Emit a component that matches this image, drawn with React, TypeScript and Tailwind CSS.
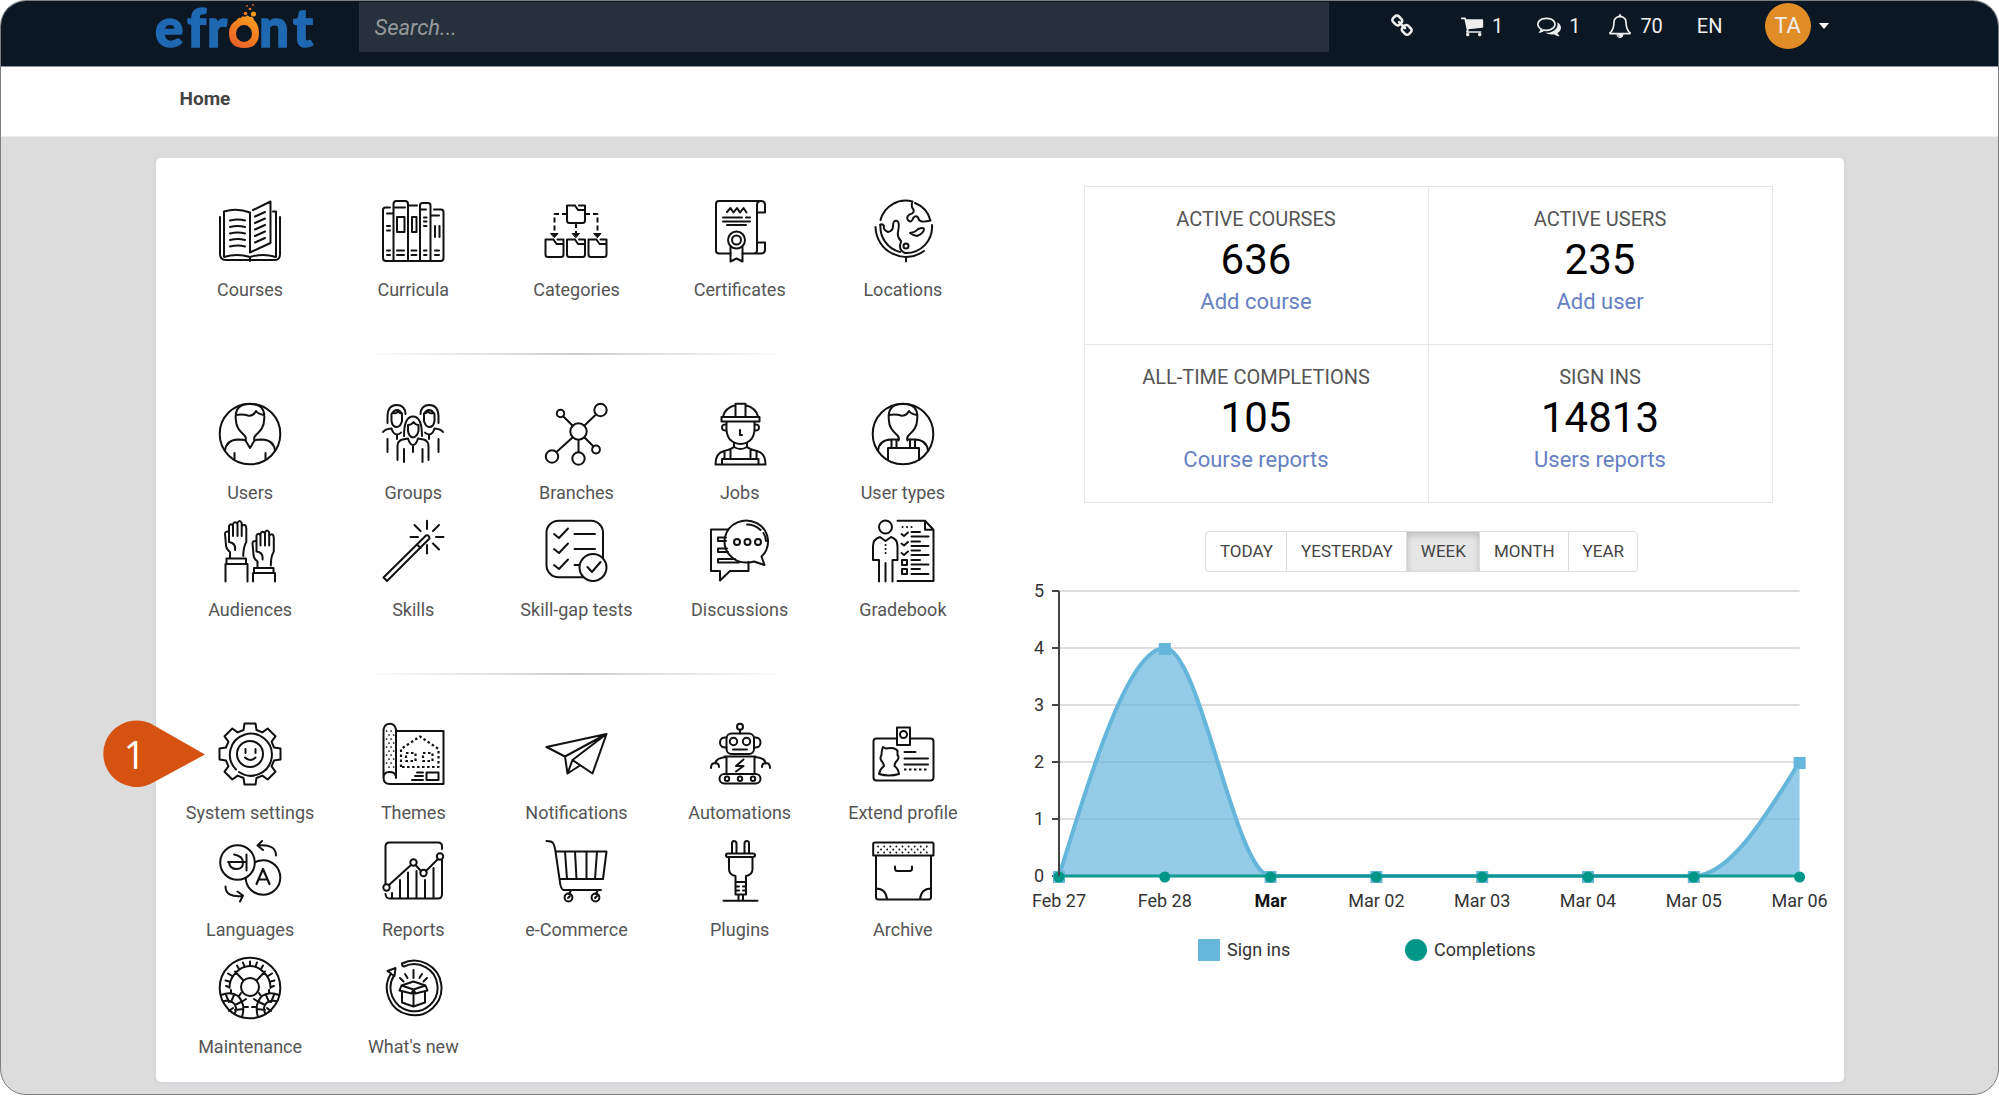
import React from "react";

type IconMap = Record<string, React.ReactNode>;

const range = (n: number) => Array.from({ length: n }, (_, i) => i);

const gearPath =
  range(8)
    .map((k) => {
      const a = (k * Math.PI) / 4;
      return [
        [-6.5, -24],
        [-5.5, -30.5],
        [5.5, -30.5],
        [6.5, -24],
      ]
        .map(([x, y], i) => {
          const px = 31 + x * Math.cos(a) - y * Math.sin(a);
          const py = 31 + x * Math.sin(a) + y * Math.cos(a);
          return (k === 0 && i === 0 ? "M" : "L") + px.toFixed(2) + " " + py.toFixed(2);
        })
        .join("");
    })
    .join("") + "z";

const folder = (x: number, y: number) =>
  `M${x + 8} ${y}H${x}v15q0 2.500 2.500 2.500h13q2.500 0 2.500-2.500V${y + 4.5}h-7l-3-4.500M${x + 12} ${y}h6v4`;

const hand = (
  <path d="M11 38v-6q-4-3-4-7L6 14q0-3 4-2.500V6q2-3.500 4 0M14 16V4q2-3.500 4.500 0v12M18.500 3q2-4 4.200 0v13M22.700 6q4-3 4.600 2v14q-3 5-3 14M10 12v10q7 1 6 8M14 4v12" />
);

const womanLeft = (
  <path d="M5.500 20V13Q6 2 14.500 2T23.500 11M11 10q5 1 5-3 0 3 4 3.500M9.500 11v7q1 6 5 6t5.500-6v-7q-2-4-5-4t-5.500 4M1 29q2-3 8.500-3.500Q11 31 14.500 31.500q3 0 4.500-2M15 32v4M5.500 36v13" />
);

const userHead = (
  <path d="M26.500 37.500q1-3-1-5Q17 25 17 18q-1-7 1-11 3-6 13-6t13 6q2 4 1 11 0 7-8.500 14.500-2 2-1 5M17 12q7-1 12 .5 5 1 8-4.500 2 3 8 4" />
);

const icons: IconMap = {
  Courses: (
    <>
      <path d="M1 17v37q0 6 6 6h49q5 0 5-6V17M5 57V11.500q13-4 26 1V52.500L51.500 43V1.500L34 10M5 57q13-4 26 0 13-4 26 0V11.500h-3M31 57v4" />
      <path d="M11 20.500q8-2 15 0M11 27q8-2 15 0M11 33.500q8-2 15 0M11 40q8-2 15 0M11 46.500q8-2 15 0M36 16.500l10-4.500M36 23l10-4.500M36 29.500l10-4.500M36 36l10-4.500M36 42.500l10-4.500" />
    </>
  ),
  Curricula: (
    <path d="M8 7.500H3.500Q1 7.500 1 10v48q0 3 3 3h54.500q3 0 3-3V12q0-2.500-2.500-2.500h-7M11.500 61V4q0-3 3-3H23q3 0 3 3v57M38 61V5.500q0-2.500 2.500-2.500H46q2.500 0 2.500 2.500V61M11.500 7.500H23M27 5.500h8M38 9.500h6M5 13.500h5.500M49 15.500h8M15 17h7.500v15H15zM30 17h4.500v15H30zM5 26h3M5 30.500h3M5 50.500h3M5 55h3M15 50.500h7M15 55h7M29.500 50.500h5M29.500 55h5M42 50.500h2.500M42 55h2.500M42 17.500h2.500M42 21.500h2.500M42 26h2.500M53 50.500h4M53 55h4M53 26v11M57.500 26v11" />
  ),
  Categories: (
    <>
      <path d={folder(22, 5.5)} />
      <path d={folder(0.5, 39.5)} />
      <path d={folder(22, 39.5)} />
      <path d={folder(43.5, 39.5)} />
      <path d="M22 14H9.500v20M40 14h12.500v20M31 23v12" strokeDasharray="5 3" strokeLinecap="butt" />
      <path d="M6 33.500h7l-3.500 4zM27.500 33.500h7l-3.500 4zM49 33.500h7l-3.500 4z" fill="currentColor" strokeWidth="1" />
    </>
  ),
  Certificates: (
    <>
      <path d="M21.500 53.500H10q-3 0-3-3V4q0-3 3-3h42q4 0 4 4v7.500h-8V5q0-4 4-4M48 12.500V46M33.500 53.500H52q4 0 4-4v-7h-8V50q0 3.500-3 3.500M18 12l3.500-4 3 4.500 3.500-4.500 3 4.500 3.500-4.500 3 4.500M14 17.500h19M37 17.500h4M14 21.500h27M18 25h19" />
      <circle cx="27.500" cy="40" r="8.500" />
      <circle cx="27.500" cy="40" r="4.500" />
      <path d="M21.500 47v14.500l6-3 6 3V47" />
    </>
  ),
  Locations: (
    <>
      <path d="M8.500 20A26 26 0 0 1 40.500 1.500q-2 5 1 8 1 4-4 5-4 3-1 6 3 3 5-3 3-3 5 1 1 5 12 2A26 26 0 0 0 43 3M60 25A26 26 0 0 1 33 53q-5-2-5-7l1-5q-4-4-3-9 2-10-1-11-4-1-4 5 0 5-5 6-5-2-4-6-2-3-4-1M8.500 24.500A26 26 0 0 0 28 52M3.500 27A30.500 30.500 0 0 0 52 51M34 57.500v4" />
      <path d="M38 33q6-1 8-4 6-2 6 0 0 4-7 7-3 0-7-3z" />
      <circle cx="34" cy="46" r="2.500" />
    </>
  ),
  Users: (
    <>
      <circle cx="31" cy="31" r="30.300" />
      {userHead}
      <path d="M6 48q1-11 13-11.500 6 0 7.500 1L31 45l4.500-7.500q1.500-1 7.500-1Q55 37 56 48M15.500 50v6M46.500 50v6" />
    </>
  ),
  Groups: (
    <>
      {womanLeft}
      <g transform="translate(62 0) scale(-1 1)">{womanLeft}</g>
      <path d="M22 33q0-19.500 9-19.500T40 33M26 22v6q1 6 5 6.500 4-.5 5.500-6.500v-6q-3 0-5-3-2 3-5.500 3M15.500 57V43q0-5 5-6.500l5.500-1Q28 42 31 42t5-6.500l5.500 1q5 1.500 5 6.500v14M22 46v13M40.500 46v13M31 42v7" />
    </>
  ),
  Branches: (
    <>
      <circle cx="33.500" cy="28.500" r="8.200" />
      <circle cx="15.500" cy="10.500" r="3.700" />
      <circle cx="55.500" cy="7" r="6.200" />
      <circle cx="7" cy="53.500" r="6.200" />
      <circle cx="33.500" cy="55.500" r="6.200" />
      <circle cx="51" cy="46.500" r="3.900" />
      <path d="M18.200 13.200l9.500 9.500M39.500 22.500L51 11.500M27.500 34.500L11.500 49M33.500 37v12M39.500 34.500l9 9" />
    </>
  ),
  Jobs: (
    <path d="M26.500 13V.7h10V13M14 13.500Q16 5 26.500 2M36.500 2Q47 5 49 13.500M12.500 14h38v4.500h-38zM17.500 18.500V27q1 13 14 14 13-1 14-14v-8.500M17.500 21.500q-4.500-.5-4.500 3t4.500 3M45.500 21.500q4.500-.5 4.500 3t-4.500 3M31 27v5h2M25 39.500V44q6.500 4 13 0v-4.500M25 44q-3 2.500-10 4-8.500 2-8.500 13.500h50q0-11.500-8.500-13.500-7-1.500-10-4M13 61v-5h36.500v5M15.500 48v8M21.500 46v10M41.500 46v10M47.500 48v8" />
  ),
  "User types": (
    <>
      <circle cx="31" cy="31" r="30.300" />
      {userHead}
      <path d="M6 48q1-11 13-11.500h7.500M35.500 36.500H43Q55 37 56 48M16 57V45h31v12M19.500 37v8M24.500 37v8M38 37v8M43 37v8" />
    </>
  ),
  Audiences: (
    <>
      {hand}
      <g transform="translate(27.500 9.500)">{hand}</g>
      <path d="M7.500 38.500H27V44H7.500zM6.500 61.500V44h22v17.500M35 48h19.500v5H35zM34 61.500V53h22v8.500" />
    </>
  ),
  Skills: (
    <path d="M1.500 57.500L44 15.500q3-1 3.500 3L5 61zM35 24.500l3.500 3.500M45 .7V9M45 25v8.500M28.500 17H36M54 17h7.500M32.500 5l6 6M57 5l-6 6M57 29.500l-6-6" />
  ),
  "Skill-gap tests": (
    <>
      <rect x="1.500" y=".7" width="56.500" height="56.500" rx="12" />
      <path d="M9 14l5 4L23 8.500M9 29l5 4 9-9.500M9 45l5 4 9-9.500M29.500 14H50M29.500 29H50M29.500 45h5" />
      <circle cx="48" cy="47.500" r="13.500" fill="white" />
      <path d="M42.500 47l4.500 5 8.500-10" />
    </>
  ),
  Discussions: (
    <>
      <path d="M19 9.500H2V51h9v9.500L21 51h18.500V42M17 17.500H9V21h8M18 28.500H9V32h10M26 39H9v3.500h21" />
      <path d="M52.500 36.500l3 8.500-10.500-3.500q-3 1-6.500 1A21.700 21 0 1 1 52.500 36.500z" />
      <circle cx="28" cy="22" r="3" />
      <circle cx="38.500" cy="22" r="3" />
      <circle cx="49" cy="22" r="3" />
      <path d="M38 4.500q8 0 13.500 5.500M54.500 13q2.500 4 2.500 8" />
    </>
  ),
  Gradebook: (
    <>
      <circle cx="13.500" cy="7" r="6.500" />
      <path d="M7 40H1V26q0-7 7-9l5.500 4 5.500-4q6.500 2 6.500 9v14h-5M7 40v21.500M13.500 43v18.500M20.500 40v21.500M25.500.7H53l8.500 9V61h-36M53 .7v9h8.500" />
      <path d="M13.500 25h.1M13.500 29h.1M13.500 33h.1M30.500 7h.1M35 7h.1M39.500 7h.1M29.500 14l2.500 2 4-3.500M29.500 23.500l2.500 2 4-3.500M29.500 33l2.500 2 4-3.500M39.500 12H48M39.500 16.500h17M39.500 21.500H48M39.500 26h17M39.500 30.500H48M39.500 35h17M39.500 40H48M39.500 44.500h17M39.500 49H48M39.500 54h17M30 40h5v5h-5zM30 49h5v5h-5z" />
    </>
  ),
  "System settings": (
    <>
      <path d={gearPath} />
      <path d="M17 46.500A21 21 0 1 1 20 49" />
      <circle cx="31" cy="31" r="13" />
      <path d="M26.500 26v4M36.500 26v4M26 34.500q5 5 10.500 0" />
    </>
  ),
  Themes: (
    <>
      <path d="M14 55V6.500Q13 .7 7.800.7T1.500 6.500v48q0 6.500 6.500 6.500h53.500V8H14M1.500 55q0-6 6-6t6.500 5" />
      <path d="M19 44V26l19-12.500L56.500 26v18zM24 30h9.500v8H24zM41 30h9.500v8H41z" strokeDasharray="2.500 2.500" strokeLinecap="butt" strokeWidth="2.200" />
      <path d="M44.500 49.500h12V57h-12zM35 49.500h6M33 53h8M30 57h11" />
      <path d="M4.500 8h7M7 12h7M4.500 16h7M7 20h7M4.500 24h7M7 28h7M4.500 32h7M7 36h7M4.500 40h7M7 44h7" strokeDasharray=".1 4.500" strokeWidth="1.700" />
    </>
  ),
  Notifications: (
    <path d="M1.500 24L61.500 11 47.500 50.500l-20-13.500L61.500 11 20 33.500zM20 33.500l2.500 17 5-13.500M22.500 50.500L35 42.500" />
  ),
  Automations: (
    <>
      <circle cx="31" cy="3.700" r="3" />
      <path d="M31 7v3.500M15.500 33.500h31M17.500 34v17M45.500 34v17M17.500 14.500Q11 14 11 19.500t6.500 5M45 14.500q6.500-.5 6.500 5t-6.500 5M24 26.500h14M17 34Q6.500 35 6.500 40.500M46 34q10.500 1 10.500 6.500M2 45q0-5 4-5t4 4M53 44q0-4 4-4t4 5M34.500 36.500L27 43h7.500L27 48.500" />
      <rect x="17.500" y="10.500" width="27.500" height="20.500" rx="5" />
      <rect x="10.500" y="51" width="41" height="9.500" rx="4.700" />
      <circle cx="24.500" cy="18.500" r="3.700" />
      <circle cx="37.500" cy="18.500" r="3.700" />
      <circle cx="18" cy="55.800" r="2.200" />
      <circle cx="31" cy="55.800" r="2.200" />
      <circle cx="44" cy="55.800" r="2.200" />
    </>
  ),
  "Extend profile": (
    <>
      <path d="M25 15.500H4.500q-3 0-3 3v36q0 3 3 3h54q3 0 3-3v-36q0-3-3-3H38M25 4.500h13V22H25z" />
      <circle cx="31.500" cy="11.500" r="3.500" />
      <path d="M11 24l2.500 1.500q10-2 12 2.500v4q2 2 0 5-3 3-3 6 4 3 4.500 8-10 3-20 0 1-5 5-8-.5-3-2.500-5-2-3 0-6 0-5 1.500-8zM32.500 29h11M32.500 35.500H56M32.500 41.500H56" />
      <path d="M32 46.500h25" strokeDasharray="2.500 2.500" strokeLinecap="butt" />
    </>
  ),
  Languages: (
    <>
      <circle cx="44" cy="37.500" r="17.300" />
      <circle cx="18.500" cy="22.500" r="17.300" fill="white" />
      <path d="M27.500 14.500v16M9 22h18M10 22.500q1 6.500 7.500 6.500T24 22.500q0-6.500-9-8M57 15.500Q57 4 39.500 5.500M43 1l-4.500 4.500 5.500 4.500M6.500 46.500q0 11 17 9.500M18.500 51.500l5.500 4-3 6" />
      <path d="M37.500 44L44 29l6.500 15M40 39.500h8.500" strokeWidth="2.200" />
    </>
  ),
  Reports: (
    <>
      <path d="M3.500 44V6.500q0-4 4-4H56q4 0 4 4V9M60 20v34q0 4.500-4 4.500H7.500Q4 58.500 3.500 54M7 45l22-20M33.500 25l5.500 6M44 31l12-12" />
      <circle cx="4.500" cy="47.500" r="3.200" />
      <circle cx="31.500" cy="22.500" r="3.200" />
      <circle cx="41.500" cy="33" r="3.200" />
      <circle cx="58" cy="16.500" r="3.200" />
      <path d="M10 53v5M18 40v18M26 32.500V58M34.500 31v27M43 40v18M51.500 28v30" />
    </>
  ),
  "e-Commerce": (
    <>
      <path d="M1.500 1q5 0 6.500 2t2.500 8.500h51L58 39H14.500l-4-27.500M14.500 39q1 10.500 4 11H56M20 11.500L22 39M30 11.500L31.500 39M41.500 11.500V39M52 11.500L50 39M26 50l-2 4M53 50l-2 4" />
      <circle cx="23.500" cy="57.500" r="3.900" />
      <circle cx="50.500" cy="57.500" r="3.900" />
      <path d="M23 58l2-2M50 58l2-2" />
    </>
  ),
  Plugins: (
    <path d="M23 13V3.500Q23 1 25 1t2.500 2.500V13M35.500 13V3.500q0-2.500 2.300-2.500T40 3.500V13M19 13.500h25q2 0 2 1.700T44 17H19q-2 0-2-1.800t2-1.700M20 17v12q0 6 6.500 7v18.500H37V36q6.500-1 6.500-7V17M26.500 42H37M27 46.500h3M34 46.500h3M27 50.500h3M34 50.500h3M29.500 55v5.500M34 55v5.500M14.500 60.700h34" />
  ),
  Archive: (
    <>
      <path d="M3 2.500h57q1.500 0 1.500 1.500v11.500H1.200V4q0-1.500 1.800-1.500zM4 15.500V57q0 2.500 2.500 2.500h50Q59 59.500 59 57V15.500M23 26.500v2q0 2.500 2.500 2.500h12q2.500 0 2.500-2.500v-2M4 48.500q10 0 11 11M59 48.500q-10 0-11 11" />
      <path d="M6 6.500h52M9 9.500h48M6 12.500h52" strokeDasharray=".1 6" strokeWidth="1.800" />
    </>
  ),
  Maintenance: (
    <>
      <circle cx="31" cy="31" r="30.300" />
      <circle cx="31" cy="30" r="9" />
      <path d="M10.500 31A20.500 21 0 0 1 17 15.500Q23 9 31 9t14 6.500A20.500 21 0 0 1 51.500 31M24 23l-8-8.500M38 23l8-8.500" />
      <path d="M10 30l-3-1M10.500 24.500l-4-1M13 19l-4-2.500M20 12l-2-3.500M25.500 9.500L24 5.500M31 9V4.500M36.500 9.500L38 5.500M42 12l2-3.500M49 19l4-2.500M51.500 24.500l4-1M52 30l3-1" />
      {[0, 1].map((k) => (
        <g key={k} transform={k ? "translate(62 0) scale(-1 1)" : undefined}>
          <path d="M2 38q10-4 17 1 8 8 4 21M5 44q8-1 11 4 2 4 0 8M15 38l-3 7M22 45l-6 3M24 52l-8 1M7 38l3 7M12 36v-3M20 39l2-3M24 44l3-2M26 50h3M10 54l4-3" />
        </g>
      ))}
    </>
  ),
  "What's new": (
    <>
      <path d="M20 6.500A27.300 27.300 0 1 1 9 16.500L5.500 14l8-3-1 8-2.500-1.500M20 6.500q0 3 2 3A23.500 23.500 0 1 1 12 18.500" />
      <path d="M19.500 28.500l12-4 12 4-12 4zM19.500 28.500l-2 5 12 3 2-4 2 4 12-3-2-5M20 34.500v11l11.500 4 11.500-4v-11M31.500 33v16M31.500 13v8M23 17l2.500 4M40 17l-2.500 4M18 21l3.500 3.500M45 21l-3.500 3.500" />
    </>
  ),
};

const groups: string[][] = [
  ["Courses", "Curricula", "Categories", "Certificates", "Locations"],
  ["Users", "Groups", "Branches", "Jobs", "User types", "Audiences", "Skills", "Skill-gap tests", "Discussions", "Gradebook"],
  ["System settings", "Themes", "Notifications", "Automations", "Extend profile", "Languages", "Reports", "e-Commerce", "Plugins", "Archive", "Maintenance", "What's new"],
];

function Callout() {
  return (
    <span className="absolute -left-[66px] -top-[3px] block h-[67px] w-[102px]">
      <svg viewBox="0 0 102 67" className="h-full w-full" aria-hidden="true">
        <path d="M102 34.500L52 6A33.300 33.300 0 1 0 52 61.500z" fill="#d65211" />
      </svg>
      <span className="absolute inset-y-0 left-0 flex w-[64px] items-center justify-center font-['Open_Sans'] text-[38px] leading-none text-white">1</span>
    </span>
  );
}

function Tile({ name }: { name: string }) {
  return (
    <a href="#" className="relative flex h-[117px] flex-col items-center gap-4 text-[18px] leading-6 text-[#555]">
      <svg
        viewBox="0 0 62 62"
        className="h-[62px] w-[62px] shrink-0 overflow-visible text-[#111]"
        fill="none"
        stroke="currentColor"
        strokeWidth="2"
        strokeLinecap="round"
        strokeLinejoin="round"
        aria-hidden="true"
      >
        {icons[name]}
      </svg>
      <span className="whitespace-nowrap">{name}</span>
      {name === "System settings" && <Callout />}
    </a>
  );
}

function Logo() {
  return (
    <svg viewBox="0 0 160 50" className="h-[50px] w-[160px] overflow-visible" role="img" aria-label="efront">
      <defs>
        <linearGradient id="flame" x1="0" y1="1" x2="0.6" y2="0">
          <stop offset="0" stopColor="#e8582a" />
          <stop offset="1" stopColor="#f8981d" />
        </linearGradient>
      </defs>
      <g fill="#1f68b2" stroke="#1f68b2" strokeWidth="1.500" fontSize="53" fontWeight="900" fontFamily="Lato, sans-serif">
        <text x="-1 31 51" y="46">efr</text>
        <text x="103 137" y="46">nt</text>
      </g>
      <path
        fill="url(#flame)"
        fillRule="evenodd"
        d="M81 19q1-3 4-2 1-3 4-1 2-3 5 0 3-1 4 3 5 5 5 13 0 15-15 15T73 32q0-9 8-13zM88 24a8 8.500 0 1 0 0 17 8 8.500 0 0 0 0-17z"
      />
      <circle cx="89.500" cy="12.500" r="1.800" fill="#f1752a" />
      <circle cx="97.500" cy="13" r="2.600" fill="#f8981d" />
      <circle cx="94" cy="8" r="1.300" fill="#f1752a" />
      <circle cx="91" cy="5" r="1" fill="#c9662a" />
      <circle cx="97" cy="4" r="1" fill="#c9662a" />
    </svg>
  );
}

const glyphs = {
  link: "M1520 1216q0-40-28-68l-208-208q-28-28-68-28-42 0-72 32 3 3 19 18.500t21.500 21.500 15 19 13 25.500 3.500 27.500q0 40-28 68t-68 28q-15 0-27.500-3.500t-25.500-13-19-15-21.500-21.500-18.500-19q-33 31-33 73 0 40 28 68l206 207q27 27 68 27 40 0 68-26l147-146q28-28 28-67zm-703-705q0-40-28-68l-206-207q-28-28-68-28-39 0-68 27l-147 146q-28 28-28 67 0 40 28 68l208 208q27 27 68 27 42 0 72-31-3-3-19-18.500t-21.500-21.500-15-19-13-25.500-3.500-27.500q0-40 28-68t68-28q15 0 27.500 3.500t25.500 13 19 15 21.500 21.500 18.500 19q33-31 33-73zm895 705q0 120-85 203l-147 146q-83 83-203 83-121 0-204-85l-206-207q-83-83-83-203 0-123 88-209l-88-88q-86 88-208 88-120 0-204-84l-208-208q-84-84-84-204t85-203l147-146q83-83 203-83 121 0 204 85l206 207q83 83 83 203 0 123-88 209l88 88q86-88 208-88 120 0 204 84l208 208q84 84 84 204z",
  cart: "M704 1536q0 52-38 90t-90 38-90-38-38-90 38-90 90-38 90 38 38 90zm896 0q0 52-38 90t-90 38-90-38-38-90 38-90 90-38 90 38 38 90zm128-1088v512q0 24-16.500 42.500t-40.500 21.500l-1044 122q13 60 13 70 0 16-24 64h920q26 0 45 19t19 45-19 45-45 19h-1024q-26 0-45-19t-19-45q0-11 8-31.500t16-36 21.500-40 15.500-29.500l-177-823h-204q-26 0-45-19t-19-45 19-45 45-19h256q16 0 28.500 6.500t19.500 15.500 13 24.500 8 26 5.500 29.500 4.500 26h1201q26 0 45 19t19 45z",
  chat: "M704 384q-153 0-286 52t-211.500 141-78.500 191q0 82 53 158t149 132l97 56-35 84q34-20 62-39l44-31 53 10q78 14 153 14 153 0 286-52t211.500-141 78.500-191-78.500-191-211.500-141-286-52zm0-128q191 0 353.500 68.500t256.500 186.500 94 257-94 257-256.500 186.500-353.500 68.500q-86 0-176-16-124 88-278 128-36 9-86 16h-3q-11 0-20.500-8t-11.500-21q-1-3-1-6.500t.5-6.500 2-6l2.500-5 3.500-5.500 4-5 4.500-5 4-4.500q5-6 23-25t26-29.500 22.500-29 25-38.500 20.500-44q-124-72-195-177t-71-224q0-139 94-257t256.500-186.500 353.500-68.500zm822 1169q10 24 20.500 44t25 38.500 22.500 29 26 29.500 23 25q1 1 4 4.500t4.500 5 4 5 3.500 5.500l2.500 5 2 6 .5 6.500-1 6.500q-3 14-13 22t-22 7q-50-7-86-16-154-40-278-128-90 16-176 16-271 0-472-132 58 4 88 4 161 0 309-45t264-129q125-92 192-212t67-254q0-77-23-152 129 71 204 178t75 230q0 120-71 224.500t-195 176.500z",
  bell: "M912 1696q0-16-16-16-59 0-101.500-42.500t-42.500-101.500q0-16-16-16t-16 16q0 73 51.500 124.500t124.500 51.500q16 0 16-16zm-666-288h1300q-266-300-266-832 0-51-24-105t-69-103-121.500-80.500-169.500-31.500-169.500 31.500-121.500 80.500-69 103-24 105q0 532-266 832zm1482 0q0 52-38 90t-90 38h-448q0 106-75 181t-181 75-181-75-75-181h-448q-52 0-90-38t-38-90q50-42 91-88t85-119.500 74.500-158.500 50-206 19.500-260q0-152 117-282.500t307-158.500q-8-19-8-39 0-40 28-68t68-28 68 28 28 68q0 20-8 39 190 28 307 158.500t117 282.500q0 139 19.500 260t50 206 74.500 158.500 85 119.500 91 88z",
};

function Glyph({ d }: { d: string }) {
  return (
    <svg viewBox="0 0 1792 1792" className="h-6 w-6" fill="currentColor" aria-hidden="true">
      <path d={d} />
    </svg>
  );
}

function Header() {
  return (
    <header className="border-b border-[#8b9096] bg-[#0b1722]">
      <div className="mx-auto flex h-[65px] w-full max-w-[1688px] items-start text-[20px] leading-6 text-[#eee]">
        <a href="#" className="mr-[43px] block shrink-0"><Logo /></a>
        <input
          type="search"
          aria-label="Search"
          placeholder="Search..."
          className="mt-px h-[50px] min-w-0 flex-1 bg-[#26313d] px-4 text-[22px] italic text-white outline-none placeholder:text-[#96999c]"
        />
        <nav className="ml-[61px] flex h-[49px] shrink-0 items-center">
          <button aria-label="Quick links" className="mr-[46px]"><Glyph d={glyphs.link} /></button>
          <button aria-label="Cart, 1 item" className="mr-[34px] flex items-center gap-2"><Glyph d={glyphs.cart} />1</button>
          <button aria-label="Messages, 1 unread" className="mr-[28px] flex items-center gap-2"><Glyph d={glyphs.chat} />1</button>
          <button aria-label="Notifications, 70 unread" className="mr-[34px] flex items-center gap-2"><Glyph d={glyphs.bell} />70</button>
          <button aria-label="Language" className="mr-[42px]">EN</button>
          <button aria-label="Account menu" className="mr-[15px] flex items-center gap-2">
            <span className="flex h-[46px] w-[46px] items-center justify-center rounded-full bg-[#e08c27] text-[22px]">TA</span>
            <span className="border-x-[5px] border-t-[6px] border-x-transparent border-t-white" />
          </button>
        </nav>
      </div>
    </header>
  );
}

const stats = [
  { label: "ACTIVE COURSES", value: "636", link: "Add course" },
  { label: "ACTIVE USERS", value: "235", link: "Add user" },
  { label: "ALL-TIME COMPLETIONS", value: "105", link: "Course reports" },
  { label: "SIGN INS", value: "14813", link: "Users reports" },
];

const periods = ["TODAY", "YESTERDAY", "WEEK", "MONTH", "YEAR"];
const days = ["Feb 27", "Feb 28", "Mar", "Mar 02", "Mar 03", "Mar 04", "Mar 05", "Mar 06"];
const signIns = [0, 4, 0, 0, 0, 0, 0, 2];

function Chart() {
  const left = 59;
  const step = 105.8;
  const base = 304;
  const unit = 57;
  const x = (i: number) => left + i * step;
  const y = (v: number) => base - v * unit;
  const c = step / 3;
  const curve =
    `M${x(0)} ${base}C${x(0) + c} ${y(2)} ${x(1) - c} ${y(4)} ${x(1)} ${y(4)}` +
    `C${x(1) + c} ${y(4)} ${x(2) - c} ${base} ${x(2)} ${base}` +
    `L${x(6)} ${base}C${x(6) + c} ${base} ${x(7) - c} ${y(1)} ${x(7)} ${y(2)}`;
  return (
    <svg viewBox="0 0 844 400" className="w-full" fontFamily="Roboto, sans-serif" fontSize="18" fill="#333" role="img" aria-label="Sign ins and completions this week">
      {range(6).map((v) => (
        <g key={v}>
          <path d={`M${left} ${y(v)}H${x(7)}`} stroke="#dedede" strokeWidth="2" />
          <path d={`M${left - 7} ${y(v)}h7`} stroke="#444" strokeWidth="2" />
          <text x={left - 15} y={y(v) + 6} textAnchor="end">{v}</text>
        </g>
      ))}
      <path d={`${curve}V${base}H${left}z`} fill="#66b5db" fillOpacity="0.7" />
      <path d={curve} fill="none" stroke="#66b5db" strokeWidth="4" />
      {signIns.map((v, i) => (
        <rect key={i} x={x(i) - 6} y={y(v) - 5} width="12" height="12" fill="#66b5db" />
      ))}
      <path d={`M${left} ${base}H${x(7)}`} stroke="#139a92" strokeWidth="3" />
      {days.map((d, i) => (
        <g key={d}>
          <circle cx={x(i)} cy={base + 1} r="5.500" fill="#009688" />
          <text x={x(i)} y="335" textAnchor="middle" fontWeight={d === "Mar" ? 700 : 400} fill={d === "Mar" ? "#111" : "#333"}>{d}</text>
        </g>
      ))}
      <path d={`M${left} ${y(5)}V${base}`} stroke="#444" strokeWidth="2" />
      <rect x="198" y="367" width="22" height="22" fill="#66b5db" />
      <text x="227" y="384">Sign ins</text>
      <circle cx="416" cy="378" r="11" fill="#009688" />
      <text x="434" y="384">Completions</text>
    </svg>
  );
}

export default function App() {
  return (
    <div className="bg-white font-['Roboto',sans-serif]">
      <div className="overflow-hidden rounded-[26px] border border-[#7c7f82] bg-[#dcdcdc] pb-3">
        <Header />
        <div className="border-b border-[#ececec] bg-white">
          <h1 className="mx-auto flex h-[69px] w-full max-w-[1688px] items-center px-6 pb-1 text-[19px] font-bold text-[#444]">Home</h1>
        </div>
        <main className="mx-auto mt-[21px] flex w-full max-w-[1688px] rounded-[5px] bg-white shadow-[0_1px_4px_#cdd0d8]">
          <section className="w-1/2 pb-2 pl-[13px] pr-[15px] pt-[42px]">
            {groups.map((names, i) => (
              <React.Fragment key={i}>
                {i > 0 && <div className="mx-auto mb-12 mt-9 h-[2px] w-[52%] bg-linear-to-r from-transparent via-[#ccc] to-transparent" />}
                <div className="grid grid-cols-5">
                  {names.map((n) => <Tile key={n} name={n} />)}
                </div>
              </React.Fragment>
            ))}
          </section>
          <section className="w-1/2 pt-7">
            <div className="ml-[84px] mr-[71px] grid grid-cols-2 border-l border-t border-[#e6e6e6]">
              {stats.map((s) => (
                <div key={s.label} className="flex h-[158px] flex-col items-center border-b border-r border-[#e6e6e6] pt-5">
                  <span className="text-[20px] leading-6 text-[#555]">{s.label}</span>
                  <span className="mt-[3px] text-[42px] leading-[52px] text-black">{s.value}</span>
                  <a href="#" className="text-[22px] leading-8 text-[#6680c4]">{s.link}</a>
                </div>
              ))}
            </div>
            <div className="mt-7 flex justify-center">
              <div className="flex rounded-[4px] border border-[#dcdcdc] text-[17px] text-[#444]">
                {periods.map((p, i) => (
                  <button
                    key={p}
                    aria-pressed={p === "WEEK"}
                    className={
                      "h-[39px] pl-[14px] pr-[13px] " +
                      (i > 0 ? "border-l border-[#dcdcdc] " : "") +
                      (p === "WEEK" ? "bg-[#e6e6e6] shadow-[inset_0_3px_6px_#bbb]" : "")
                    }
                  >
                    {p}
                  </button>
                ))}
              </div>
            </div>
            <Chart />
          </section>
        </main>
      </div>
    </div>
  );
}
